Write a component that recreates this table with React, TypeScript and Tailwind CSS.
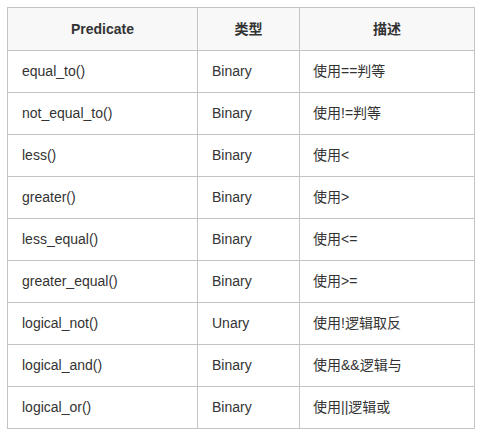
const rows: [string, string, string][] = [
  ["equal_to()", "Binary", "使用==判等"],
  ["not_equal_to()", "Binary", "使用!=判等"],
  ["less()", "Binary", "使用<"],
  ["greater()", "Binary", "使用>"],
  ["less_equal()", "Binary", "使用<="],
  ["greater_equal()", "Binary", "使用>="],
  ["logical_not()", "Unary", "使用!逻辑取反"],
  ["logical_and()", "Binary", "使用&&逻辑与"],
  ["logical_or()", "Binary", "使用||逻辑或"],
];

export default function App() {
  return (
    <div className="h-[435px] w-[480px] bg-white pl-[7px] pt-[7px] font-['Liberation_Sans','Noto_Sans_CJK_SC',sans-serif] text-[14px] text-[#333]">
      <table className="w-[467px] table-fixed border-collapse">
        <colgroup>
          <col className="w-[190px]" />
          <col className="w-[102px]" />
          <col className="w-[175px]" />
        </colgroup>
        <thead>
          <tr className="h-[43px] bg-[#f8f8f8]">
            <th className="border border-[#c4c4c4] text-center font-bold">Predicate</th>
            <th className="border border-[#c4c4c4] text-center font-bold">类型</th>
            <th className="border border-[#c4c4c4] text-center font-bold">描述</th>
          </tr>
        </thead>
        <tbody>
          {rows.map(([name, kind, desc]) => (
            <tr key={name} className="h-[42px]">
              <td className="border border-[#c4c4c4] pl-[14px]">{name}</td>
              <td className="border border-[#c4c4c4] pl-[14px]">{kind}</td>
              <td className="border border-[#c4c4c4] pl-[13px]">{desc}</td>
            </tr>
          ))}
        </tbody>
      </table>
    </div>
  );
}
